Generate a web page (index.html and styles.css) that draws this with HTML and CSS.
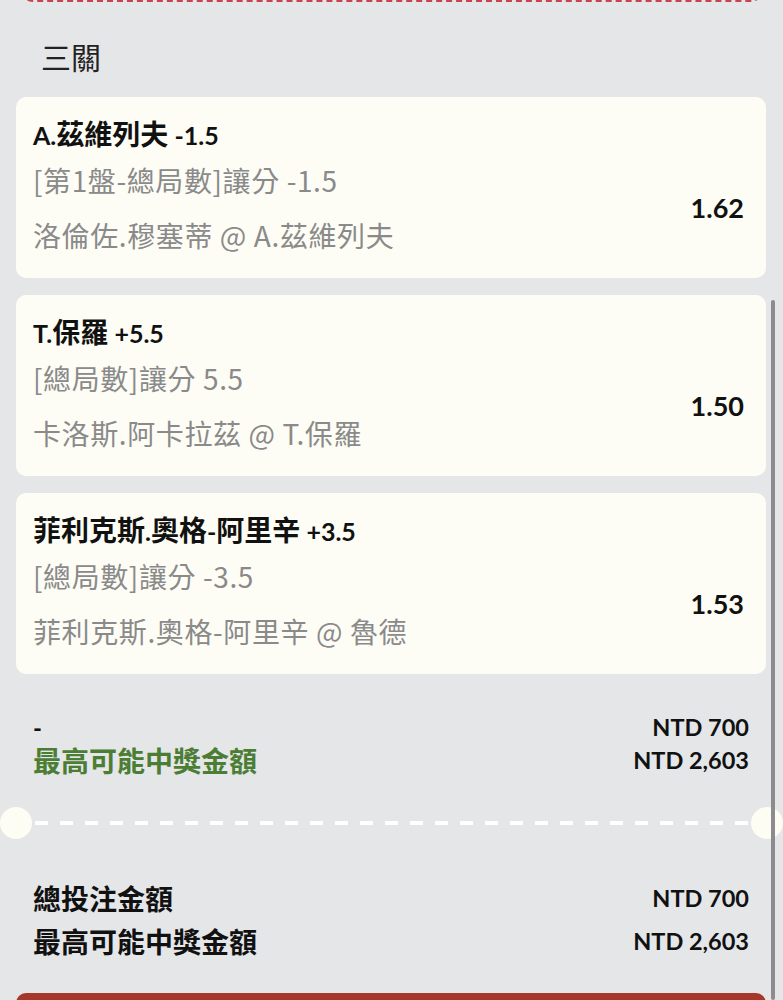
FILE: index.html
```html
<!DOCTYPE html>
<html>
<head>
    <meta charset="utf-8">
    <link rel="stylesheet" href="styles.css">
</head>
<body>
    <div class="prev-slip"></div>

    <h2 class="group-title">三關</h2>

    <div class="legs">
        <div class="leg">
            <div class="leg-pick">A.<span class="zh">茲維列夫</span> -1.5</div>
            <div class="leg-body">
                <div class="leg-info">
                    <p>[第1盤-總局數]讓分 -1.5</p>
                    <p>洛倫佐.穆塞蒂 @ A.茲維列夫</p>
                </div>
                <div class="leg-odds">1.62</div>
            </div>
        </div>

        <div class="leg">
            <div class="leg-pick">T.<span class="zh">保羅</span> +5.5</div>
            <div class="leg-body">
                <div class="leg-info">
                    <p>[總局數]讓分 5.5</p>
                    <p>卡洛斯.阿卡拉茲 @ T.保羅</p>
                </div>
                <div class="leg-odds">1.50</div>
            </div>
        </div>

        <div class="leg">
            <div class="leg-pick"><span class="zh">菲利克斯</span>.<span class="zh">奧格</span>-<span class="zh">阿里辛</span> +3.5</div>
            <div class="leg-body">
                <div class="leg-info">
                    <p>[總局數]讓分 -3.5</p>
                    <p>菲利克斯.奧格-阿里辛 @ 魯德</p>
                </div>
                <div class="leg-odds">1.53</div>
            </div>
        </div>
    </div>

    <div class="summary">
        <div class="sum-row">
            <span class="sum-label stake-type">-</span>
            <span class="sum-amount">NTD 700</span>
        </div>
        <div class="sum-row">
            <span class="sum-label win">最高可能中獎金額</span>
            <span class="sum-amount">NTD 2,603</span>
        </div>
    </div>

    <div class="divider">
        <span class="notch"></span>
        <span class="dash-line"></span>
        <span class="notch"></span>
    </div>

    <div class="totals">
        <div class="sum-row tall">
            <span class="sum-label">總投注金額</span>
            <span class="sum-amount">NTD 700</span>
        </div>
        <div class="sum-row tall">
            <span class="sum-label">最高可能中獎金額</span>
            <span class="sum-amount">NTD 2,603</span>
        </div>
    </div>

    <button class="place-bet"></button>

    <div class="scroll-thumb"></div>
</body>
</html>
```

FILE: styles.css
```css
body {
    margin: 0;
    background-color: #e5e6e8;
    font-family: 'Lato', 'Noto Sans CJK TC', sans-serif;
    color: #111;
    overflow: hidden;
}

/* bottom edge of the slip above */
.prev-slip {
    height: 36px;
    margin: -38px 20px 0 21px;
    border: 2px dashed #c8424f;
    border-radius: 12px;
}

.group-title {
    margin: 34px 0 0;
    padding-left: 41px;
    font-family: 'Noto Sans CJK TC', sans-serif;
    font-size: 30px;
    font-weight: 400;
    line-height: 40px;
    color: #222;
}

.legs {
    margin: 21px 17px 0 16px;
    display: flex;
    flex-direction: column;
    gap: 17px;
}
.leg {
    background-color: #fdfdf5;
    border-radius: 10px;
    padding: 20px 22px 23px 17px;
}
.leg-pick {
    height: 32px;
    font-size: 25px;
    font-weight: 700;
    line-height: 32px;
    color: #111;
    white-space: nowrap;
}
.leg-pick .zh {
    font-family: 'Noto Sans CJK TC', sans-serif;
    font-size: 28px;
    line-height: 32px;
}
.leg-body {
    margin-top: 11px;
    display: flex;
    align-items: center;
    justify-content: space-between;
}
.leg-info p {
    margin: 0;
    height: 40px;
    font-family: 'Noto Sans CJK TC', sans-serif;
    font-size: 28px;
    letter-spacing: 0.6px;
    line-height: 40px;
    color: #8a8a8a;
    white-space: nowrap;
}
.leg-info p + p {
    margin-top: 15px;
}
.leg-odds {
    font-size: 27px;
    font-weight: 700;
    line-height: 32px;
    color: #111;
}

.summary {
    margin-top: 37px;
    padding: 0 34px 0 33px;
}
.totals {
    margin-top: 38px;
    padding: 0 34px 0 33px;
}
.sum-row {
    display: flex;
    align-items: center;
    justify-content: space-between;
    height: 33px;
}
.sum-row.tall {
    height: 43px;
}
.sum-label {
    font-family: 'Noto Sans CJK TC', sans-serif;
    font-size: 28px;
    font-weight: 700;
    line-height: 33px;
    color: #111;
}
.sum-label.stake-type {
    font-family: 'Lato', sans-serif;
    font-size: 24px;
    line-height: 28px;
}
.sum-label.win {
    color: #4b7d34;
}
.sum-amount {
    font-size: 23.5px;
    font-weight: 700;
    line-height: 33px;
    color: #111;
}

.divider {
    margin-top: 30px;
    display: flex;
    align-items: center;
    gap: 3px;
}
.notch {
    width: 32px;
    height: 32px;
    border-radius: 50%;
    background-color: #fdfdf3;
    flex-shrink: 0;
}
.dash-line {
    flex-grow: 1;
    height: 4px;
    background: repeating-linear-gradient(to right, #fff 0 13px, transparent 13px 25px);
}

.place-bet {
    display: block;
    width: 750px;
    height: 60px;
    margin: 30px 0 0 16px;
    border: none;
    border-radius: 10px;
    background-color: #a4392b;
}

.scroll-thumb {
    position: fixed;
    top: 300px;
    bottom: 0;
    right: 8px;
    width: 4px;
    border-radius: 2px;
    background-color: #8c8c8c;
}
```
